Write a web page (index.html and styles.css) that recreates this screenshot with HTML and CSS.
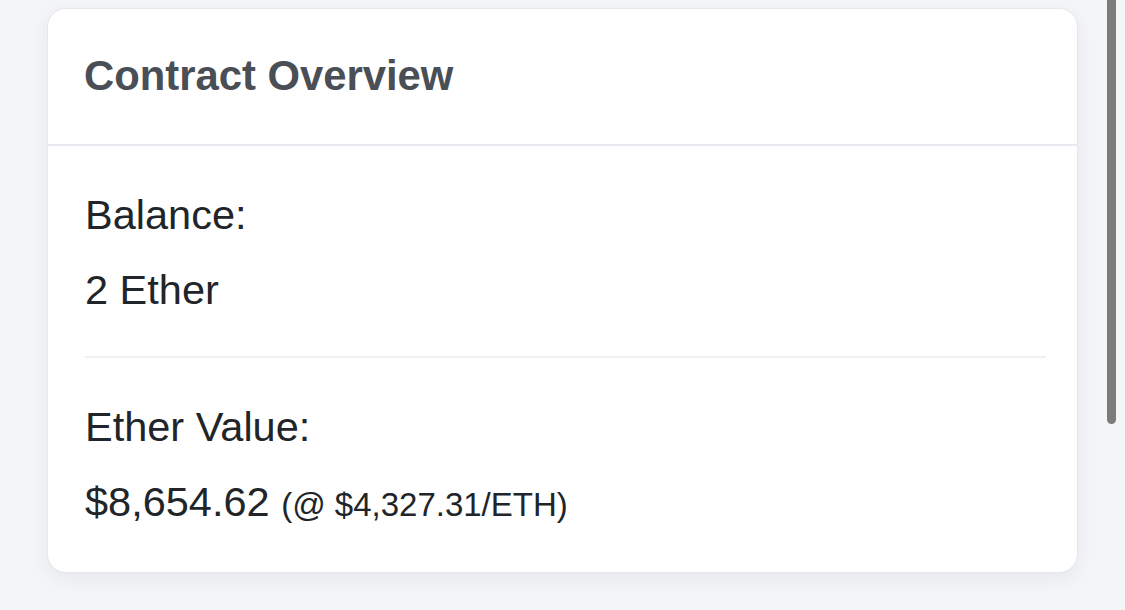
FILE: index.html
```html
<!DOCTYPE html>
<html>
<head>
<meta charset="utf-8">
<link rel="stylesheet" href="styles.css">
</head>
<body>
<div class="page">
  <section class="card">
    <header class="card-header">
      <h2 class="card-title">Contract Overview</h2>
    </header>
    <div class="card-body">
      <div class="row">
        <div class="label">Balance:</div>
        <div class="value">2 Ether</div>
      </div>
      <div class="row last">
        <div class="label">Ether Value:</div>
        <div class="value">$8,654.62 <span class="rate">(@ $4,327.31/ETH)</span></div>
      </div>
    </div>
  </section>
  <div class="next-card"></div>
</div>
<div class="scrollbar"></div>
</body>
</html>
```

FILE: styles.css
```css
html, body {
  margin: 0;
  padding: 0;
  background: #f4f5f7;
  height: 100%;
  overflow: hidden;
}

body {
  font-family: "Liberation Sans", Arial, sans-serif;
  color: #212529;
}

.page {
  padding-top: 8px;
}

.card {
  box-sizing: border-box;
  width: 1031px;
  margin-left: 47px;
  background: #ffffff;
  border: 1px solid #e6e7ee;
  border-radius: 19px;
  box-shadow: 0 6px 16px rgba(189, 197, 209, 0.25);
}

.card-header {
  padding: 43px 32px 44px 36px;
  border-bottom: 2px solid #e8e9f1;
}

.card-title {
  margin: 0;
  font-size: 41.8px;
  line-height: 48px;
  font-weight: 700;
  color: #4a4e55;
}

.card-body {
  padding: 0 31px 0 37px;
}

.row {
  display: flex;
  flex-direction: column;
  gap: 27px;
  padding: 45px 0 42px;
  border-bottom: 2px solid #eef0f2;
}

.row.last {
  border-bottom: none;
  padding-bottom: 43px;
}

.label,
.value {
  font-size: 41.5px;
  line-height: 48px;
}

.rate {
  font-size: 33px;
}

.next-card {
  margin-top: 37px;
  border-top: 1px solid #e8e9ed;
  height: 10px;
}

.scrollbar {
  position: absolute;
  top: 0;
  left: 1107px;
  width: 9px;
  height: 424px;
  background: #7b7b7c;
  border-radius: 0 0 5px 5px;
}
```
